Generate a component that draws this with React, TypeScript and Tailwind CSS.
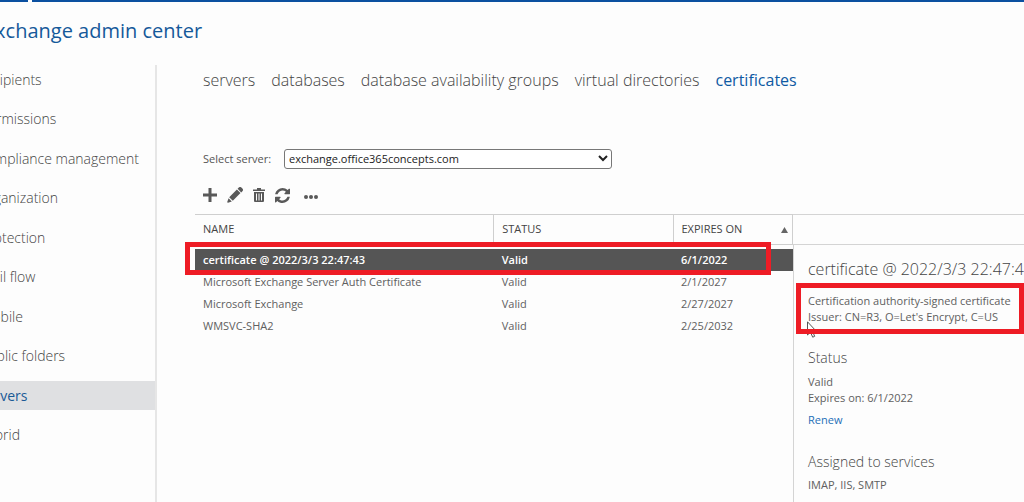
import React, { useState } from "react";
import cn from "clsx";

const navItems = [
  "recipients",
  "permissions",
  "compliance management",
  "organization",
  "protection",
  "mail flow",
  "mobile",
  "public folders",
  "servers",
  "hybrid",
];

const tabs = [
  "servers",
  "databases",
  "database availability groups",
  "virtual directories",
  "certificates",
];

const certificates = [
  { id: 1, name: "certificate @ 2022/3/3 22:47:43", status: "Valid", expires: "6/1/2022" },
  { id: 2, name: "Microsoft Exchange Server Auth Certificate", status: "Valid", expires: "2/1/2027" },
  { id: 3, name: "Microsoft Exchange", status: "Valid", expires: "2/27/2027" },
  { id: 4, name: "WMSVC-SHA2", status: "Valid", expires: "2/25/2032" },
];

const Sidebar = () => (
  <nav className="w-[157px] shrink-0 border-r-2 border-[#e6e6e6]">
    <ul className="flex h-[385px] flex-col justify-between">
      {navItems.map((item) => (
        <li key={item}>
          <a
            href="#"
            className={cn(
              "-ml-5 flex h-[29px] items-center whitespace-nowrap text-sm",
              item === "servers"
                ? "bg-[#dfe0e2] text-[#1a5a96]"
                : "font-light text-[#444]"
            )}
          >
            {item}
          </a>
        </li>
      ))}
    </ul>
  </nav>
);

const Tabs = () => (
  <nav className="flex h-[29px] items-center gap-4 whitespace-nowrap pl-2 text-base">
    {tabs.map((tab) => (
      <a
        key={tab}
        href="#"
        className={tab === "certificates" ? "text-[#0f5aa3]" : "font-light text-[#444]"}
      >
        {tab}
      </a>
    ))}
  </nav>
);

const Toolbar = () => (
  <div className="flex h-4 items-center gap-[10px] pl-2 text-[#595959]">
    <button aria-label="Add">
      <svg width="14" height="14" viewBox="0 0 14 14" fill="currentColor">
        <path d="M5.5 0h3v5.5H14v3H8.5V14h-3V8.5H0v-3h5.5z" />
      </svg>
    </button>
    <button aria-label="Edit">
      <svg width="16" height="16" viewBox="0 0 16 16" fill="currentColor">
        <path d="M11.800.600a1.800 1.800 0 0 1 2.600 0l1 1a1.800 1.800 0 0 1 0 2.600l-1.200 1.200L10.600 1.800zM9.900 2.500l3.600 3.600-7.700 7.700-3.600-3.600zM1.600 11.200l3.200 3.200L1 15.800a.800.800 0 0 1-.800-.800z" />
      </svg>
    </button>
    <button aria-label="Delete">
      <svg width="12" height="14" viewBox="0 0 12 14" fill="currentColor">
        <path d="M4 0h4v1.500h4V3H0V1.500h4z" />
        <path
          fillRule="evenodd"
          d="M1 4h10v9a1 1 0 0 1-1 1H2a1 1 0 0 1-1-1zM3 5.500v7h1v-7zM5.500 5.500v7h1v-7zM8 5.500v7h1v-7z"
        />
      </svg>
    </button>
    <button aria-label="Refresh">
      <svg width="15" height="15" viewBox="0 0 1536 1536" fill="currentColor">
        <path d="M1511 928q0 5-1 7-64 268-268 434.500t-478 166.500q-146 0-282.500-55t-243.500-157l-129 129q-19 19-45 19t-45-19-19-45v-448q0-26 19-45t45-19h448q26 0 45 19t19 45-19 45l-137 137q71 66 161 102t187 36q134 0 250-65t186-179q11-17 53-117 8-23 30-23h192q13 0 22.500 9.500t9.500 22.500zm25-800v448q0 26-19 45t-45 19h-448q-26 0-45-19t-19-45 19-45l138-138q-148-137-349-137-134 0-250 65t-186 179q-11 17-53 117-8 23-30 23h-199q-13 0-22.500-9.500t-9.500-22.500v-7q65-268 270-434.500t480-166.500q146 0 284 55.500t245 156.500l130-129q19-19 45-19t45 19 19 45z" />
      </svg>
    </button>
    <button aria-label="More" className="pl-1">
      <svg width="14" height="14" viewBox="0 0 14 14" fill="currentColor">
        <circle cx="2" cy="9" r="2" />
        <circle cx="7" cy="9" r="2" />
        <circle cx="12" cy="9" r="2" />
      </svg>
    </button>
  </div>
);

const CertificateTable = () => {
  const [selectedId, setSelectedId] = useState(1);

  return (
    <div className="relative min-w-0 flex-1">
      <table className="w-full table-fixed text-left text-[11px]">
        <thead>
          <tr className="h-[30px] border-y border-[#cfcfcf] text-[#444]">
            <th className="w-1/2 border-r border-[#cfcfcf] pl-2 font-normal">NAME</th>
            <th className="w-[30%] border-r border-[#cfcfcf] pl-2 font-normal">STATUS</th>
            <th className="w-[20%] border-r border-[#cfcfcf] pl-2 font-normal">
              <span className="flex items-center justify-between pr-1">
                EXPIRES ON
                <svg width="7" height="6" viewBox="0 0 7 6" fill="#666">
                  <path d="M3.500 0L7 6H0z" />
                </svg>
              </span>
            </th>
          </tr>
        </thead>
        <tbody>
          <tr className="h-1">
            <td colSpan={3} />
          </tr>
          {certificates.map((cert) => (
            <tr
              key={cert.id}
              onClick={() => setSelectedId(cert.id)}
              className={cn(
                "h-[22px]",
                cert.id === selectedId
                  ? "bg-[#555] font-semibold text-white"
                  : "text-[#606060]"
              )}
            >
              <td className="pt-[2px] pl-2">{cert.name}</td>
              <td className="pt-[2px] pl-2">{cert.status}</td>
              <td className="pt-[2px] pl-2">{cert.expires}</td>
            </tr>
          ))}
        </tbody>
      </table>
      <div className="pointer-events-none absolute top-7 right-[22px] -left-[10px] h-[33px] border-[5px] border-[#ee1c25]" />
    </div>
  );
};

const DetailsPane = () => (
  <aside className="flex w-[231px] shrink-0 flex-col whitespace-nowrap text-[11px] leading-4 text-[#606060]">
    <div className="h-[31px] border-y border-[#d4d4d4]" />
    <div className="flex-1 border-l border-[#d4d4d4] pl-[14px]">
      <h2 className="mt-3 text-base leading-6 font-light text-[#444]">
        certificate @ 2022/3/3 22:47:43
      </h2>
      <div className="relative mt-3">
        <p>Certification authority-signed certificate</p>
        <p>Issuer: CN=R3, O=Let's Encrypt, C=US</p>
        <svg
          className="absolute top-7 -left-[1px]"
          width="11"
          height="18"
          viewBox="0 0 11 18"
          fill="#fff"
          stroke="#555"
        >
          <path d="M.5.800v13.200l3-2.800 2.200 5 2-.900-2.200-4.800h4z" />
        </svg>
        <div className="pointer-events-none absolute -top-[10px] right-0 -left-3 h-[51px] border-[5px] border-[#ee1c25]" />
      </div>
      <h3 className="mt-[23px] text-sm leading-5 font-light text-[#444]">Status</h3>
      <p className="mt-[6px]">Valid</p>
      <p>Expires on: 6/1/2022</p>
      <a href="#" className="mt-[6px] block text-[#1d6fb8]">
        Renew
      </a>
      <h3 className="mt-6 text-sm leading-5 font-light text-[#444]">
        Assigned to services
      </h3>
      <p className="mt-[5px]">IMAP, IIS, SMTP</p>
    </div>
  </aside>
);

export default function App() {
  return (
    <div className="flex min-h-screen flex-col overflow-hidden bg-[#fdfdfd] font-['Open_Sans',sans-serif]">
      <div className="h-[2px] bg-[#0b50a0] pl-7">
        <div className="h-[2px] w-1 bg-white" />
      </div>
      <header className="flex h-[63px] items-center pb-[6px]">
        <h1 className="-ml-4 text-xl whitespace-nowrap text-[#15599a]">
          Exchange admin center
        </h1>
      </header>
      <div className="flex flex-1">
        <Sidebar />
        <main className="ml-[38px] flex min-w-0 flex-1 flex-col">
          <Tabs />
          <div className="mt-[55px] flex h-5 items-center pl-2 text-[11px]">
            <label htmlFor="server" className="w-[81px] text-[#555]">
              Select server:
            </label>
            <div className="relative">
              <select
                id="server"
                className="h-5 w-[328px] appearance-none rounded-[3px] border border-[#777] bg-white pl-1 text-[#222]"
              >
                <option>exchange.office365concepts.com</option>
              </select>
              <svg
                className="pointer-events-none absolute top-[6px] right-1"
                width="10"
                height="7"
                viewBox="0 0 10 7"
                fill="none"
                stroke="#222"
                strokeWidth="2"
              >
                <path d="M1 1l4 4 4-4" />
              </svg>
            </div>
          </div>
          <div className="mt-[18px]">
            <Toolbar />
          </div>
          <div className="mt-[11px] flex flex-1">
            <CertificateTable />
            <DetailsPane />
          </div>
        </main>
      </div>
    </div>
  );
}
